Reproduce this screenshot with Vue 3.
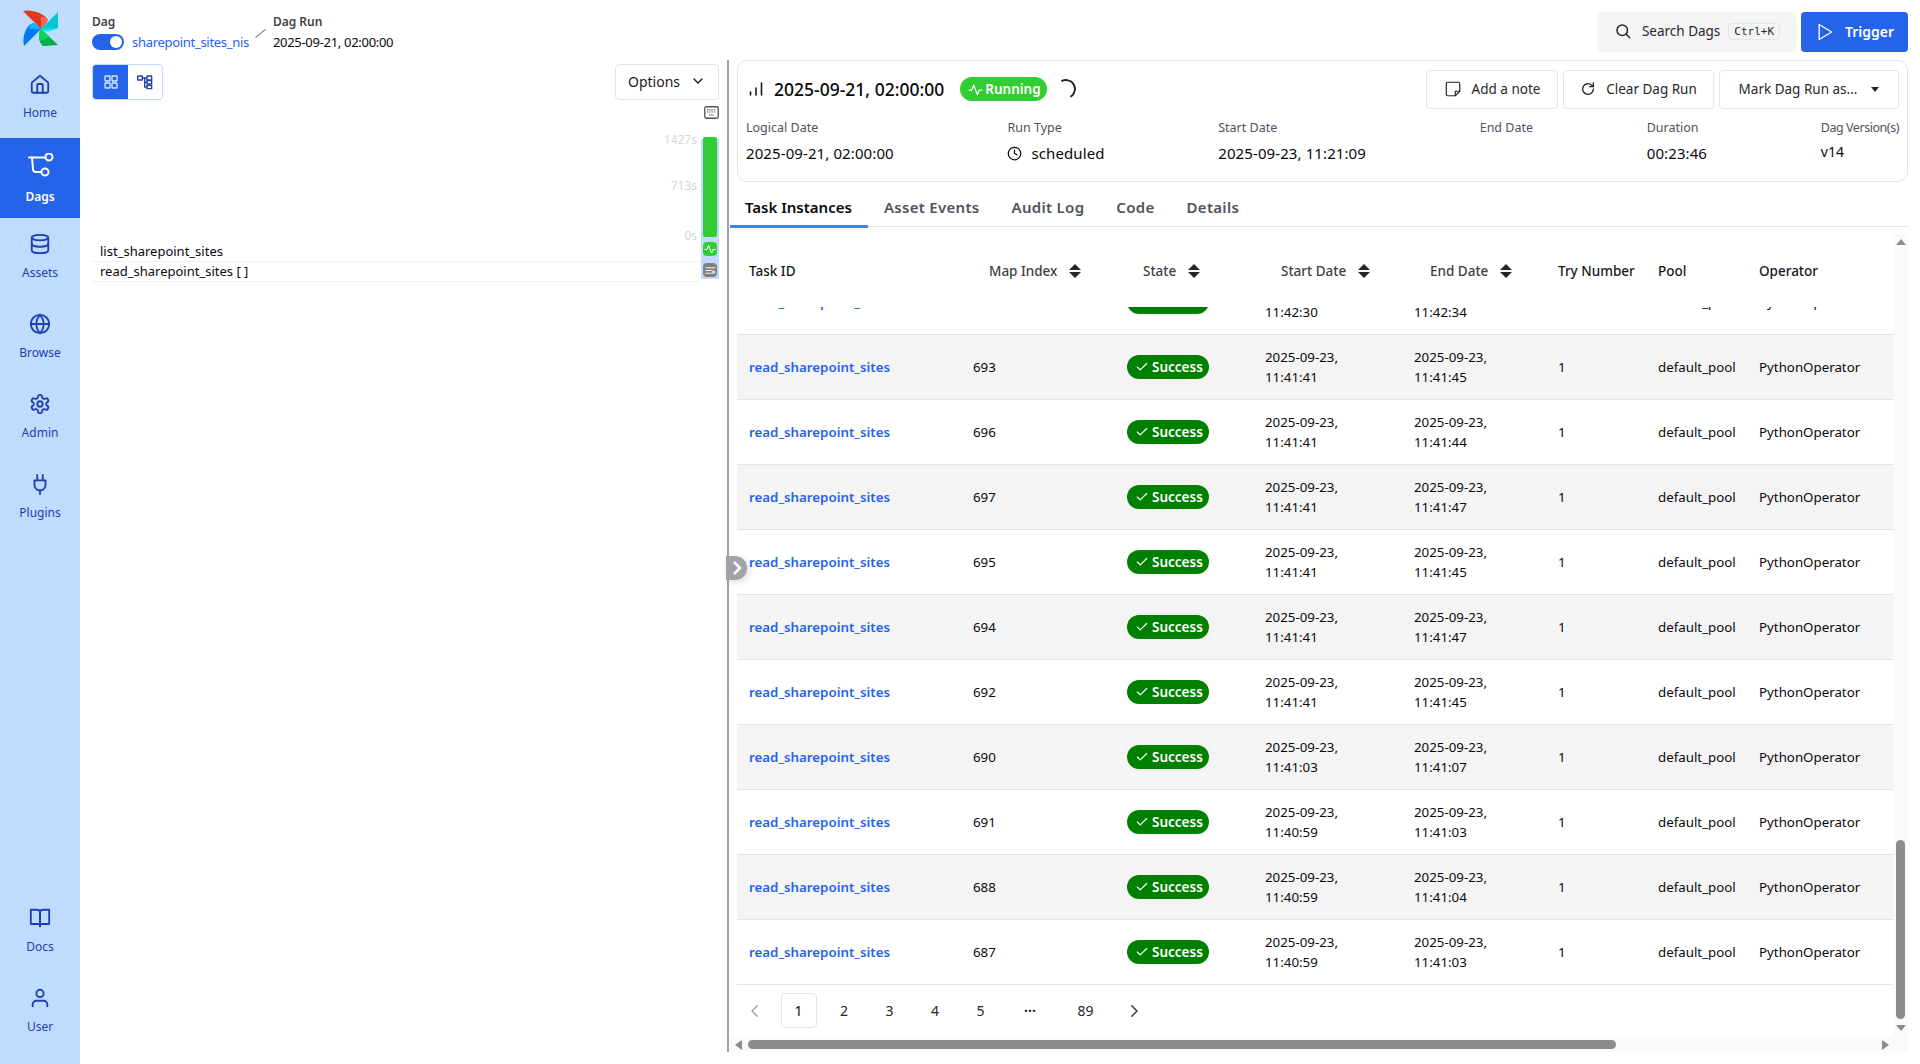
<script setup>
const nav = [
  { label: 'Home', icon: 'home' },
  { label: 'Dags', icon: 'dags', active: true },
  { label: 'Assets', icon: 'assets' },
  { label: 'Browse', icon: 'browse' },
  { label: 'Admin', icon: 'admin' },
  { label: 'Plugins', icon: 'plugins' },
]
const navBottom = [
  { label: 'Docs', icon: 'docs' },
  { label: 'User', icon: 'user' },
]
const meta = [
  { label: 'Logical Date', value: '2025-09-21, 02:00:00' },
  { label: 'Run Type', value: 'scheduled', clock: true },
  { label: 'Start Date', value: '2025-09-23, 11:21:09' },
  { label: 'End Date', value: '' },
  { label: 'Duration', value: '00:23:46' },
  { label: 'Dag Version(s)', value: 'v14', small: true },
]
const tabs = ['Task Instances', 'Asset Events', 'Audit Log', 'Code', 'Details']
const rows = [
  ['693', '11:41:41', '11:41:45'],
  ['696', '11:41:41', '11:41:44'],
  ['697', '11:41:41', '11:41:47'],
  ['695', '11:41:41', '11:41:45'],
  ['694', '11:41:41', '11:41:47'],
  ['692', '11:41:41', '11:41:45'],
  ['690', '11:41:03', '11:41:07'],
  ['691', '11:40:59', '11:41:03'],
  ['688', '11:40:59', '11:41:04'],
  ['687', '11:40:59', '11:41:03'],
]
const pages = ['2', '3', '4', '5']
</script>

<template>
  <div class="app">
    <aside class="sidebar">
      <div class="logo">
        <svg width="48" height="48" viewBox="0 0 48 48">
          <path d="M25 23 L7 5 C15 3 28 7 32 14 C30 18 27 21 25 23 Z" fill="#e43921" />
          <path d="M25 23 L25 11 C28 10 31 12 32 14 C30 18 27 21 25 23 Z" fill="#f0694f" />
          <path d="M25 23 L42 6 L42 22 C36 23 30 24 25 23 Z" fill="#00c7d4" />
          <path d="M25 23 L42 22 C36 25 30 26 28 25 Z" fill="#11e1ee" />
          <path d="M25 23 L42 39 L27 40 C22 36 22 28 25 23 Z" fill="#00ad46" />
          <path d="M25 23 L34 31 L24 35 C22 31 23 26 25 23 Z" fill="#04d659" />
          <path d="M25 23 L8 40 C6 32 9 20 17 17 C20 18 23 21 25 23 Z" fill="#017cee" />
          <path d="M25 23 L13 23 C14 20 15 18 17 17 C20 18 23 21 25 23 Z" fill="#0cb6ff" />
        </svg>
      </div>
      <nav class="nav">
        <a v-for="item in nav" :key="item.label" class="nav-item" :class="{ active: item.active }">
          <svg v-if="item.icon === 'home'" class="nav-icon" viewBox="0 0 24 24">
            <path d="M3 10.5 12 3l9 7.500V20a1.500 1.500 0 0 1-1.500 1.500h-15A1.500 1.500 0 0 1 3 20z" />
            <path d="M9 21.500V13a1 1 0 0 1 1-1h4a1 1 0 0 1 1 1v8.500" />
          </svg>
          <svg v-else-if="item.icon === 'dags'" class="nav-icon big" viewBox="0 0 28 28">
            <path d="M3 4.500h16.500" />
            <path d="M6 4.500 7 16a3 3 0 0 0 3 3h5.500" />
            <circle cx="23" cy="4" r="3.500" />
            <circle cx="19" cy="19" r="3.500" />
          </svg>
          <svg v-else-if="item.icon === 'assets'" class="nav-icon" viewBox="0 0 24 24">
            <ellipse cx="12" cy="5" rx="9" ry="3" />
            <path d="M3 5v14c0 1.700 4 3 9 3s9-1.300 9-3V5" />
            <path d="M3 12c0 1.700 4 3 9 3s9-1.300 9-3" />
          </svg>
          <svg v-else-if="item.icon === 'browse'" class="nav-icon" viewBox="0 0 24 24">
            <circle cx="12" cy="12" r="10" />
            <path d="M2 12h20" />
            <path d="M12 2a15 15 0 0 1 4 10 15 15 0 0 1-4 10 15 15 0 0 1-4-10 15 15 0 0 1 4-10z" />
          </svg>
          <svg v-else-if="item.icon === 'admin'" class="nav-icon" viewBox="0 0 24 24">
            <path d="M12.220 2h-.440a2 2 0 0 0-2 2v.180a2 2 0 0 1-1 1.730l-.430.250a2 2 0 0 1-2 0l-.150-.080a2 2 0 0 0-2.730.730l-.220.380a2 2 0 0 0 .730 2.730l.150.100a2 2 0 0 1 1 1.720v.510a2 2 0 0 1-1 1.740l-.150.090a2 2 0 0 0-.730 2.730l.220.380a2 2 0 0 0 2.730.730l.150-.080a2 2 0 0 1 2 0l.430.250a2 2 0 0 1 1 1.730V20a2 2 0 0 0 2 2h.440a2 2 0 0 0 2-2v-.180a2 2 0 0 1 1-1.730l.430-.250a2 2 0 0 1 2 0l.150.080a2 2 0 0 0 2.730-.730l.220-.390a2 2 0 0 0-.730-2.730l-.150-.080a2 2 0 0 1-1-1.740v-.500a2 2 0 0 1 1-1.740l.150-.090a2 2 0 0 0 .730-2.730l-.220-.380a2 2 0 0 0-2.730-.730l-.150.080a2 2 0 0 1-2 0l-.430-.250a2 2 0 0 1-1-1.730V4a2 2 0 0 0-2-2z" />
            <circle cx="12" cy="12" r="3" />
          </svg>
          <svg v-else-if="item.icon === 'plugins'" class="nav-icon" viewBox="0 0 24 24">
            <path d="M9 2v6" />
            <path d="M15 2v6" />
            <path d="M6 8h12v5a6 6 0 0 1-12 0z" />
            <path d="M12 19v4" />
          </svg>
          <span>{{ item.label }}</span>
        </a>
      </nav>
      <nav class="nav bottom">
        <a v-for="item in navBottom" :key="item.label" class="nav-item">
          <svg v-if="item.icon === 'docs'" class="nav-icon" viewBox="0 0 24 24">
            <path d="M2 3h7a3 3 0 0 1 3 3v15a2.500 2.500 0 0 0-2.500-2.500H2z" />
            <path d="M22 3h-7a3 3 0 0 0-3 3v15a2.500 2.500 0 0 1 2.500-2.500H22z" />
          </svg>
          <svg v-else class="nav-icon" viewBox="0 0 24 24">
            <circle cx="12" cy="7" r="4" />
            <path d="M4 21v-2a4 4 0 0 1 4-4h8a4 4 0 0 1 4 4v2" />
          </svg>
          <span>{{ item.label }}</span>
        </a>
      </nav>
    </aside>

    <div class="main">
      <header class="topbar">
        <div class="crumbs">
          <div class="crumb">
            <div class="crumb-label">Dag</div>
            <div class="crumb-value">
              <span class="toggle"><span class="knob"></span></span>
              <a class="dag-link">sharepoint_sites_nis</a>
            </div>
          </div>
          <span class="slash"></span>
          <div class="crumb">
            <div class="crumb-label">Dag Run</div>
            <div class="crumb-value">2025-09-21, 02:00:00</div>
          </div>
        </div>
        <div class="top-actions">
          <button class="search">
            <svg class="ico" viewBox="0 0 24 24" width="18" height="18"><circle cx="11" cy="11" r="7" /><path d="m21 21-5-5" /></svg>
            <span>Search Dags</span>
            <kbd>Ctrl+K</kbd>
          </button>
          <button class="trigger">
            <svg class="ico thin" viewBox="0 0 24 24" width="20" height="20"><path d="M5 3l15 9-15 9z" /></svg>
            <span>Trigger</span>
          </button>
        </div>
      </header>

      <div class="panels">
        <section class="left">
          <div class="left-top">
            <div class="view-toggle">
              <button class="vt on">
                <svg class="ico" viewBox="0 0 24 24" width="16" height="16">
                  <rect x="3" y="3" width="7.500" height="7.500" rx="1" /><rect x="13.500" y="3" width="7.500" height="7.500" rx="1" />
                  <rect x="3" y="13.500" width="7.500" height="7.500" rx="1" /><rect x="13.500" y="13.500" width="7.500" height="7.500" rx="1" />
                </svg>
              </button>
              <button class="vt">
                <svg class="ico" viewBox="0 0 24 24" width="16" height="16">
                  <rect x="1" y="3" width="7" height="6" /><rect x="15" y="3" width="7" height="6" /><rect x="15" y="10" width="7" height="5" /><rect x="15" y="17" width="7" height="5" />
                  <path d="M8 6h7M11.500 6v13.500H15M11.500 12.500H15" />
                </svg>
              </button>
            </div>
            <button class="options">
              Options
              <svg class="ico" viewBox="0 0 24 24" width="16" height="16"><path d="m6 9 6 6 6-6" /></svg>
            </button>
          </div>
          <div class="kb-line">
            <svg width="15" height="13" viewBox="0 0 15 13">
              <rect x=".75" y=".75" width="13.500" height="11.500" rx="1.500" fill="#fff" stroke="#52525b" stroke-width="1.300" />
              <path d="M3 3.800h9M3 6h9M5 8.800h5" stroke="#52525b" stroke-width="1.200" stroke-dasharray="1 .8" />
            </svg>
          </div>
          <div class="grid-area">
            <div class="axis">
              <span>1427s</span><span>713s</span><span>0s</span>
            </div>
            <div class="bar-col">
              <div class="bar"></div>
              <div class="bar-ico green">
                <svg class="ico" viewBox="0 0 24 24" width="12" height="12"><path d="M2 13h4l3-8 6 15 3-7h4" /></svg>
              </div>
              <div class="bar-ico gray">
                <svg class="ico" viewBox="0 0 24 24" width="11" height="11"><path d="M2 6h20M2 12h12M2 18h12M17 13v6l5-3z" /></svg>
              </div>
            </div>
          </div>
          <div class="task-names">
            <div class="task-name">list_sharepoint_sites</div>
            <div class="task-name">read_sharepoint_sites [ ]</div>
          </div>
        </section>

        <div class="splitter">
          <button class="collapse">
            <svg class="ico thick" viewBox="0 0 24 24" width="18" height="18"><path d="m9 5 7 7-7 7" /></svg>
          </button>
        </div>

        <section class="right">
          <div class="card">
            <div class="card-head">
              <svg class="signal" viewBox="0 0 16 16" width="16" height="16"><path d="M2.500 14v-3M8 14V7M13.500 14V2" /></svg>
              <h1>2025-09-21, 02:00:00</h1>
              <span class="badge running">
                <svg class="ico" viewBox="0 0 24 24" width="15" height="15"><path d="M2 13h4l3-8 6 15 3-7h4" /></svg>
                Running
              </span>
              <span class="spinner"></span>
              <div class="head-actions">
                <button class="btn">
                  <svg class="ico thin" viewBox="0 0 24 24" width="18" height="18"><path d="M5 3h14a2 2 0 0 1 2 2v10l-6 6H5a2 2 0 0 1-2-2V5a2 2 0 0 1 2-2z" /><path d="M15 21v-6h6" /></svg>
                  Add a note
                </button>
                <button class="btn">
                  <svg class="ico" viewBox="0 0 24 24" width="16" height="16"><path d="M20 12a8 8 0 1 1-2.500-5.800L20 8.500" /><path d="M20 3v5.500h-5.500" /></svg>
                  Clear Dag Run
                </button>
                <button class="btn">
                  Mark Dag Run as...
                  <span class="caret"></span>
                </button>
              </div>
            </div>
            <div class="meta">
              <div v-for="m in meta" :key="m.label" class="meta-item">
                <div class="meta-label">{{ m.label }}</div>
                <div class="meta-value" :class="{ small: m.small }">
                  <svg v-if="m.clock" class="ico" viewBox="0 0 24 24" width="15" height="15"><circle cx="12" cy="12" r="10" /><path d="M12 6v6l4 2" /></svg>
                  {{ m.value }}
                </div>
              </div>
            </div>
          </div>

          <div class="tabs">
            <a v-for="(t, i) in tabs" :key="t" class="tab" :class="{ current: i === 0 }">{{ t }}</a>
          </div>

          <div class="table-wrap">
            <div class="table-scroll">
              <div class="table-main">
                <div class="row head">
                  <div class="cell">Task ID</div>
                  <div class="cell sort muted">Map Index <span class="sort-ico"></span></div>
                  <div class="cell sort muted">State <span class="sort-ico"></span></div>
                  <div class="cell sort muted">Start Date <span class="sort-ico"></span></div>
                  <div class="cell sort muted">End Date <span class="sort-ico"></span></div>
                  <div class="cell">Try Number</div>
                  <div class="cell">Pool</div>
                  <div class="cell">Operator</div>
                </div>
                <div class="clipped">
                  <div class="row body-row first">
                    <a class="cell task-link">read_sharepoint_sites</a>
                    <div class="cell">689</div>
                    <div class="cell"><span class="badge success"><svg class="ico" viewBox="0 0 24 24" width="14" height="14"><path d="M20 6 9 17l-5-5" /></svg> Success</span></div>
                    <div class="cell">2025-09-23,<br />11:42:30</div>
                    <div class="cell">2025-09-23,<br />11:42:34</div>
                    <div class="cell">1</div>
                    <div class="cell">default_pool</div>
                    <div class="cell">PythonOperator</div>
                  </div>
                </div>
                <div v-for="r in rows" :key="r[0]" class="row body-row">
                  <a class="cell task-link">read_sharepoint_sites</a>
                  <div class="cell">{{ r[0] }}</div>
                  <div class="cell"><span class="badge success"><svg class="ico" viewBox="0 0 24 24" width="14" height="14"><path d="M20 6 9 17l-5-5" /></svg> Success</span></div>
                  <div class="cell">2025-09-23,<br />{{ r[1] }}</div>
                  <div class="cell">2025-09-23,<br />{{ r[2] }}</div>
                  <div class="cell">1</div>
                  <div class="cell">default_pool</div>
                  <div class="cell">PythonOperator</div>
                </div>
                <div class="pager">
                  <button class="pg arrow dim"><svg class="ico" viewBox="0 0 24 24" width="18" height="18"><path d="m15 5-7 7 7 7" /></svg></button>
                  <button class="pg current">1</button>
                  <button v-for="p in pages" :key="p" class="pg">{{ p }}</button>
                  <span class="pg dots">···</span>
                  <button class="pg wide">89</button>
                  <button class="pg arrow next"><svg class="ico" viewBox="0 0 24 24" width="18" height="18"><path d="m9 5 7 7-7 7" /></svg></button>
                </div>
              </div>
              <div class="vscroll">
                <span class="arr up"></span>
                <div class="vtrack"><div class="vthumb"></div></div>
                <span class="arr down"></span>
              </div>
            </div>
            <div class="hscroll">
              <span class="arr left-a"></span>
              <div class="htrack"><div class="hthumb"></div></div>
              <span class="arr right-a"></span>
            </div>
          </div>
        </section>
      </div>
    </div>
  </div>
</template>

<style>
html, body {
  margin: 0;
  background: #fff;
}
</style>

<style scoped>
* {
  box-sizing: border-box;
}
.app {
  display: flex;
  width: 1920px;
  height: 1064px;
  overflow: hidden;
  font-family: "Noto Sans", "Open Sans", sans-serif;
  font-size: 13.5px;
  color: #09090b;
}
button {
  font: inherit;
  color: inherit;
  background: none;
  border: none;
  padding: 0;
}
.ico {
  fill: none;
  stroke: currentColor;
  stroke-width: 2;
  stroke-linecap: round;
  stroke-linejoin: round;
  flex: none;
}
.ico.thin {
  stroke-width: 1.6;
}
.ico.thick {
  stroke-width: 3.5;
}
.sidebar {
  width: 80px;
  flex: none;
  background: #bfdbfe;
  display: flex;
  flex-direction: column;
  color: #1e40af;
}
.logo {
  height: 58px;
  padding: 6px 0 0 16px;
}
.nav {
  display: flex;
  flex-direction: column;
}
.nav.bottom {
  margin-top: auto;
  margin-bottom: 12px;
}
.nav-item {
  height: 80px;
  display: flex;
  flex-direction: column;
  align-items: center;
  padding-top: 15px;
  font-size: 12px;
  line-height: 16px;
  gap: 10px;
}
.nav-item.active {
  background: #2563eb;
  color: #fff;
  font-weight: 600;
  gap: 8px;
}
.nav-icon {
  width: 22px;
  height: 22px;
  fill: none;
  stroke: currentColor;
  stroke-width: 2;
  stroke-linecap: round;
  stroke-linejoin: round;
}
.nav-icon.big {
  width: 28px;
  height: 28px;
}
.main {
  flex: 1;
  min-width: 0;
  display: flex;
  flex-direction: column;
}
.topbar {
  height: 60px;
  display: flex;
  justify-content: space-between;
  padding: 12px 12px 0 12px;
}
.crumbs {
  display: flex;
  align-items: flex-start;
  padding-top: 3px;
}
.crumb-label {
  font-size: 12px;
  font-weight: 600;
  line-height: 14px;
  color: #3f3f46;
}
.crumb-value {
  display: flex;
  align-items: center;
  gap: 8px;
  height: 24px;
  margin-top: 1px;
  font-size: 13px;
  letter-spacing: -0.3px;
}
.toggle {
  width: 32px;
  height: 16px;
  border-radius: 8px;
  background: #2563eb;
  position: relative;
}
.knob {
  position: absolute;
  right: 2px;
  top: 2px;
  width: 12px;
  height: 12px;
  border-radius: 50%;
  background: #fff;
}
.dag-link {
  color: #2563eb;
}
.slash {
  width: 1px;
  height: 13px;
  margin: 12px 12px 0 11px;
  background: #71717a;
  transform: rotate(50deg);
}
.top-actions {
  display: flex;
  gap: 4px;
  height: 40px;
}
.search {
  width: 200px;
  background: #f4f4f5;
  border-radius: 6px;
  display: flex;
  align-items: center;
  justify-content: center;
  gap: 10px;
  color: #27272a;
  font-size: 13.5px;
  padding-bottom: 2px;
}
kbd {
  font-family: "DejaVu Sans Mono", monospace;
  font-size: 11px;
  border: 1px solid #e4e4e7;
  border-radius: 4px;
  padding: 1px 5px;
  margin-left: -2px;
}
.trigger {
  width: 107px;
  background: #2563eb;
  color: #fff;
  border-radius: 4px;
  font-weight: 600;
  font-size: 14px;
  display: flex;
  align-items: center;
  justify-content: center;
  gap: 10px;
  padding-bottom: 1px;
}
.panels {
  flex: 1;
  display: flex;
  min-height: 0;
  padding-bottom: 12px;
}
.left {
  width: 647px;
  flex: none;
  padding: 4px 8px 0 12px;
  position: relative;
}
.left-top {
  display: flex;
  justify-content: space-between;
}
.view-toggle {
  display: flex;
  height: 36px;
  width: 71px;
  border: 1px solid #bfdbfe;
  border-radius: 4px;
  overflow: hidden;
}
.vt {
  flex: 1;
  display: flex;
  align-items: center;
  justify-content: center;
  color: #1e40af;
}
.vt.on {
  background: #2563eb;
  color: #dbeafe;
  flex: 0 0 35px;
}
.options {
  width: 104px;
  border: 1px solid #e4e4e7;
  border-radius: 4px;
  display: flex;
  align-items: center;
  justify-content: center;
  gap: 10px;
  font-size: 14px;
  color: #18181b;
  padding-bottom: 2px;
}
.kb-line {
  display: flex;
  justify-content: flex-end;
  height: 13px;
  margin-top: 6px;
  line-height: 0;
}
.grid-area {
  display: flex;
  justify-content: flex-end;
  margin-top: 20px;
}
.axis {
  display: flex;
  flex-direction: column;
  justify-content: space-between;
  align-items: flex-end;
  height: 112px;
  margin: -7px 4px 0 0;
  font-size: 12px;
  line-height: 16px;
  color: #d4d4d8;
}
.axis span:nth-child(2) {
  margin-bottom: 5px;
}
.bar-col {
  width: 18px;
  height: 140px;
  background: #bfdbfe;
  padding: 0 2px;
}
.bar {
  height: 100px;
  margin-top: -2px;
  background: #32cd32;
  border-radius: 2px;
}
.bar-ico {
  height: 14px;
  margin-top: 5px;
  border-radius: 4px;
  display: flex;
  align-items: center;
  justify-content: center;
  color: #fff;
}
.bar-ico.green {
  background: #32cd32;
}
.bar-ico.gray {
  background: #808080;
  margin-top: 7px;
}
.task-names {
  position: absolute;
  left: 12px;
  right: 26px;
  top: 182px;
}
.task-name {
  height: 20px;
  padding-left: 8px;
  line-height: 18px;
  font-size: 13px;
  border-bottom: 1px solid #f0f0f2;
}
.splitter {
  width: 2px;
  flex: none;
  background: #a1a1aa;
  position: relative;
  margin-right: 1px;
}
.collapse {
  position: absolute;
  left: -1px;
  top: 496px;
  width: 21px;
  height: 24px;
  border-radius: 0 12px 12px 0;
  background: #a1a1aa;
  color: #fff;
  display: flex;
  align-items: center;
  justify-content: center;
  box-shadow: 2px 2px 6px rgba(0, 0, 0, 0.15);
}
.right {
  flex: 1;
  min-width: 0;
  padding-right: 12px;
  display: flex;
  flex-direction: column;
}
.card {
  margin-left: 7px;
  height: 122px;
  border: 1px solid #e4e4e7;
  border-radius: 10px;
  padding: 8px 8px 0 8px;
}
.card-head {
  display: flex;
  align-items: center;
  height: 40px;
}
.signal {
  fill: none;
  stroke: #18181b;
  stroke-width: 1.6;
  stroke-linecap: round;
  margin: 0 10px 0 2px;
}
h1 {
  margin: 0;
  font-size: 17.5px;
  font-weight: 500;
  line-height: 24px;
}
.badge {
  display: inline-flex;
  align-items: center;
  height: 24px;
  border-radius: 12px;
  color: #fff;
  font-weight: 600;
  font-size: 13.5px;
  white-space: nowrap;
}
.badge.running {
  background: #32cd32;
  margin-left: 16px;
  padding: 0 8px;
  gap: 2px;
  width: 87px;
}
.badge.success {
  background: #008000;
  width: 82px;
  padding-left: 8px;
  gap: 3px;
}
.spinner {
  width: 20px;
  height: 20px;
  margin-left: 9px;
  border-radius: 50%;
  border: 2px solid transparent;
  border-top-color: #27272a;
  border-right-color: #27272a;
  transform: rotate(15deg);
}
.head-actions {
  margin-left: auto;
  display: flex;
  gap: 5px;
}
.btn {
  height: 39px;
  border: 1px solid #e4e4e7;
  border-radius: 4px;
  display: flex;
  align-items: center;
  justify-content: center;
  gap: 10px;
  font-size: 13.5px;
  color: #27272a;
  white-space: nowrap;
}
.btn:nth-child(1) { width: 132px; }
.btn:nth-child(2) { width: 151px; }
.btn:nth-child(3) { width: 180px; }
.caret {
  width: 0;
  height: 0;
  border-left: 4.5px solid transparent;
  border-right: 4.5px solid transparent;
  border-top: 5px solid #27272a;
  margin-left: 4px;
}
.meta {
  display: flex;
  justify-content: space-between;
  margin-top: 11px;
}
.meta-label {
  font-size: 12.5px;
  line-height: 16px;
  color: #52525b;
}
.meta-item:last-child .meta-label {
  letter-spacing: -0.45px;
}
.meta-value {
  display: flex;
  align-items: center;
  gap: 9px;
  font-size: 15px;
  line-height: 20px;
  margin-top: 7px;
  letter-spacing: 0.1px;
}
.meta-value.small {
  font-size: 14px;
  margin-top: 6px;
}
.tabs {
  display: flex;
  height: 45px;
  padding-top: 13px;
  border-bottom: 1px solid #e4e4e7;
  margin-right: -1px;
  font-weight: 600;
  font-size: 15px;
}
.tab {
  padding: 0 16px 0 16px;
  height: 33px;
  line-height: 24px;
  color: #52525b;
  white-space: nowrap;
  letter-spacing: 0.3px;
}
.tab.current {
  padding-left: 15px;
  letter-spacing: 0;
  color: #09090b;
  border-bottom: 3px solid #3b82f6;
}
.table-wrap {
  flex: 1;
  min-height: 0;
  display: flex;
  flex-direction: column;
}
.table-scroll {
  flex: 1;
  min-height: 0;
  display: flex;
}
.table-main {
  flex: 1;
  min-width: 0;
  padding-left: 7px;
}
.row {
  display: grid;
  grid-template-columns: 224px 154px 138px 149px 144px 100px 101px 146px;
  align-items: center;
}
.cell {
  padding-left: 12px;
}
.head {
  height: 80px;
  font-weight: 500;
  align-items: flex-start;
  padding-top: 35px;
  color: #18181b;
}
.head .muted {
  color: #3f3f46;
}
.sort {
  padding-left: 28px;
  display: flex;
  align-items: center;
  gap: 12px;
}
.sort-ico {
  width: 12px;
  height: 14px;
  position: relative;
  display: inline-block;
}
.sort-ico::before,
.sort-ico::after {
  content: "";
  position: absolute;
  left: 0;
  border-left: 6px solid transparent;
  border-right: 6px solid transparent;
}
.sort-ico::before {
  top: 0;
  border-bottom: 6px solid #27272a;
}
.sort-ico::after {
  bottom: 0;
  border-top: 6px solid #27272a;
}
.clipped {
  height: 28px;
  overflow: hidden;
  position: relative;
}
.body-row {
  height: 65px;
  border-bottom: 1px solid #e4e4e7;
  line-height: 20px;
  font-size: 13.3px;
}
.body-row.first {
  margin-top: -37px;
  background: #fff;
}
.body-row:nth-of-type(odd):not(.first) {
  background: #f4f4f5;
}
.task-link {
  color: #2563eb;
  font-weight: 600;
}
.pager {
  display: flex;
  align-items: center;
  gap: 9.5px;
  margin-top: 8px;
}
.pg {
  width: 36px;
  height: 35px;
  border-radius: 4px;
  display: flex;
  align-items: center;
  justify-content: center;
  font-size: 14px;
  color: #27272a;
}
.pg.current {
  border: 1px solid #e4e4e7;
  color: #09090b;
}
.pg.arrow {
  color: #3f3f46;
}
.pg.dim {
  color: #a1a1aa;
  margin-right: -2px;
}
.pg.dots {
  margin-left: 4px;
  font-weight: 700;
}
.pg.wide {
  margin-left: 10px;
}
.pg.next {
  margin-left: 3px;
}
.vscroll {
  width: 15px;
  flex: none;
  margin-top: 7px;
  background: #fafafa;
  display: flex;
  flex-direction: column;
  align-items: center;
  padding: 5px 0 0;
}
.vtrack {
  flex: 1;
  width: 100%;
  position: relative;
}
.vthumb {
  position: absolute;
  left: 3px;
  right: 3px;
  bottom: 6px;
  height: 179px;
  background: #8c8c8c;
  border-radius: 5px;
}
.arr {
  width: 0;
  height: 0;
  display: block;
}
.arr.up {
  border-left: 5px solid transparent;
  border-right: 5px solid transparent;
  border-bottom: 6px solid #8c8c8c;
}
.arr.down {
  border-left: 5px solid transparent;
  border-right: 5px solid transparent;
  border-top: 6px solid #8c8c8c;
  margin-bottom: 6px;
}
.hscroll {
  height: 15px;
  flex: none;
  background: #fafafa;
  display: flex;
  align-items: center;
  padding: 0 19px 0 5px;
}
.htrack {
  flex: 1;
  height: 100%;
  position: relative;
}
.hthumb {
  position: absolute;
  left: 6px;
  top: 3px;
  width: 868px;
  height: 9px;
  background: #8c8c8c;
  border-radius: 5px;
}
.arr.left-a {
  border-top: 5px solid transparent;
  border-bottom: 5px solid transparent;
  border-right: 7px solid #8c8c8c;
}
.arr.right-a {
  border-top: 5px solid transparent;
  border-bottom: 5px solid transparent;
  border-left: 7px solid #8c8c8c;
}
</style>
